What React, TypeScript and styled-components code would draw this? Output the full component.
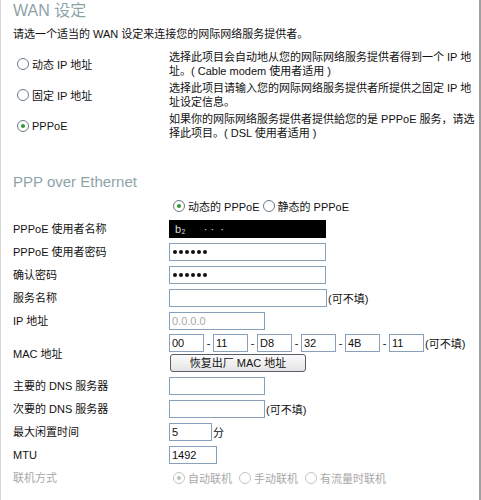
import React from "react";
import styled, { createGlobalStyle } from "styled-components";

const Global = createGlobalStyle`
  html, body { margin: 0; padding: 0; background: #fff; }
  body { font-family: "Liberation Sans", "Noto Sans CJK SC", sans-serif; font-size: 11px; color: #111; }
  * { box-sizing: border-box; }
`;

const Frame = styled.div`
  width: 481px;
  height: 500px;
  border-left: 1px solid #d6d6d6;
  border-right: 2px solid #a0a0a0;
  padding: 1px 0 0 12px;
  overflow: hidden;
`;

const Title = styled.h1<{ $size: number }>`
  margin: 0;
  font-size: ${(p) => p.$size}px;
  font-weight: normal;
  color: #8ea3a8;
  line-height: 20px;
`;

const Intro = styled.p`
  margin: 6px 0 0;
  line-height: 14px;
`;

const ChoiceList = styled.div`
  margin-top: 9px;
  display: flex;
  flex-direction: column;
  gap: 3px;
`;

const ChoiceRow = styled.div`
  display: grid;
  grid-template-columns: 156px 1fr;
  align-items: center;
`;

const Desc = styled.div`
  line-height: 14px;
  white-space: nowrap;
`;

const RadioLabel = styled.label<{ $disabled?: boolean; $indent?: number }>`
  display: inline-flex;
  align-items: center;
  gap: 3px;
  margin-left: ${(p) => p.$indent ?? 4}px;
  color: ${(p) => (p.$disabled ? "#a8a8a8" : "inherit")};
  white-space: nowrap;
`;

const Dot = styled.span<{ $on?: boolean; $disabled?: boolean }>`
  width: 12px;
  height: 12px;
  border-radius: 50%;
  border: 1px solid ${(p) => (p.$disabled ? "#c4c4c4" : "#6a7a86")};
  background: #fff;
  display: inline-flex;
  align-items: center;
  justify-content: center;
  &::after {
    content: "";
    width: 4px;
    height: 4px;
    border-radius: 50%;
    background: ${(p) => (p.$on ? (p.$disabled ? "#b5c7b5" : "#2f9a2f") : "transparent")};
  }
`;

const Section2 = styled.div`
  margin-top: 32px;
`;

const Form = styled.div`
  margin-top: 5px;
  display: grid;
  grid-template-columns: 156px 1fr;
  row-gap: 5px;
  align-items: center;
`;

const Label = styled.div<{ $disabled?: boolean }>`
  color: ${(p) => (p.$disabled ? "#a8a8a8" : "inherit")};
  line-height: 18px;
`;

const Field = styled.div`
  display: flex;
  align-items: center;
  gap: 1px;
  height: 18px;
`;

const Box = styled.input<{ $w: number; $dark?: boolean }>`
  width: ${(p) => p.$w}px;
  height: 18px;
  margin: 0;
  padding: 0 2px;
  border: 1px solid ${(p) => (p.$dark ? "#000" : "#8aa0b8")};
  background: ${(p) => (p.$dark ? "#000" : "#fff")};
  color: ${(p) => (p.$dark ? "#ddd" : "#111")};
  font-family: "Liberation Sans", sans-serif;
  font-size: 11px;
  outline: none;
  &:disabled { color: #aaa; background: #fff; }
`;

const Secret = styled.div`
  width: 157px;
  height: 18px;
  border: 1px solid #8aa0b8;
  display: flex;
  align-items: center;
  padding-left: 3px;
  gap: 2px;
`;

const Bullet = styled.span`
  width: 4px;
  height: 4px;
  border-radius: 50%;
  background: #111;
`;

const MacStack = styled.div`
  display: flex;
  flex-direction: column;
  gap: 2px;
  margin-top: -1px;
`;

const MacLine = styled.div`
  display: flex;
  align-items: center;
  height: 18px;
`;

const Dash = styled.span`
  width: 9px;
  text-align: center;
`;

const Btn = styled.button`
  width: 136px;
  height: 18px;
  margin-left: 1px;
  padding: 0;
  border: 1px solid #555d66;
  border-radius: 3px;
  background: linear-gradient(#fbfbfb, #e4e4e4);
  font-family: "Liberation Sans", "Noto Sans CJK SC", sans-serif;
  font-size: 11px;
  line-height: 16px;
  color: #111;
`;

const RadioGroup = styled.div`
  display: flex;
  align-items: center;
  gap: 1px;
  height: 18px;
`;

const Unit = styled.span`
  margin-left: 1px;
`;

function Radio({ on, disabled, children, indent }: { on?: boolean; disabled?: boolean; children: React.ReactNode; indent?: number }) {
  return (
    <RadioLabel $disabled={disabled} $indent={indent}>
      <Dot $on={on} $disabled={disabled} />
      {children}
    </RadioLabel>
  );
}

function Dots() {
  return (
    <Secret>
      {Array.from({ length: 6 }).map((_, i) => (
        <Bullet key={i} />
      ))}
    </Secret>
  );
}

const mac = ["00", "11", "D8", "32", "4B", "11"];

export default function App() {
  return (
    <>
      <Global />
      <Frame>
        <Title $size={16}>WAN 设定</Title>
        <Intro>请选一个适当的 WAN 设定来连接您的网际网络服务提供者。</Intro>
        <ChoiceList>
          <ChoiceRow>
            <Radio>动态 IP 地址</Radio>
            <Desc>
              选择此项目会自动地从您的网际网络服务提供者得到一个 IP 地<br />
              址。( Cable modem 使用者适用 )
            </Desc>
          </ChoiceRow>
          <ChoiceRow>
            <Radio>固定 IP 地址</Radio>
            <Desc>
              选择此项目请输入您的网际网络服务提供者所提供之固定 IP 地<br />
              址设定信息。
            </Desc>
          </ChoiceRow>
          <ChoiceRow>
            <Radio on>PPPoE</Radio>
            <Desc>
              如果你的网际网络服务提供者提供給您的是 PPPoE 服务，请选<br />
              择此项目。( DSL 使用者适用 )
            </Desc>
          </ChoiceRow>
        </ChoiceList>

        <Section2>
          <Title $size={15}>PPP over Ethernet</Title>
          <Form>
            <div />
            <RadioGroup>
              <Radio on>动态的 PPPoE</Radio>
              <Radio indent={2}>静态的 PPPoE</Radio>
            </RadioGroup>

            <Label>PPPoE 使用者名称</Label>
            <Field>
              <Box $w={157} $dark readOnly value=" b₂      · ·  ·" />
            </Field>

            <Label>PPPoE 使用者密码</Label>
            <Field>
              <Dots />
            </Field>

            <Label>确认密码</Label>
            <Field>
              <Dots />
            </Field>

            <Label>服务名称</Label>
            <Field>
              <Box $w={158} readOnly value="" />
              <span>(可不填)</span>
            </Field>

            <Label>IP 地址</Label>
            <Field>
              <Box $w={96} disabled value="0.0.0.0" />
            </Field>

            <Label>MAC 地址</Label>
            <MacStack>
              <MacLine>
                {mac.map((m, i) => (
                  <React.Fragment key={i}>
                    {i > 0 && <Dash>-</Dash>}
                    <Box $w={35} readOnly value={m} />
                  </React.Fragment>
                ))}
                <Unit>(可不填)</Unit>
              </MacLine>
              <Btn>恢复出厂 MAC 地址</Btn>
            </MacStack>

            <Label>主要的 DNS 服务器</Label>
            <Field>
              <Box $w={96} readOnly value="" />
            </Field>

            <Label>次要的 DNS 服务器</Label>
            <Field>
              <Box $w={96} readOnly value="" />
              <span>(可不填)</span>
            </Field>

            <Label>最大闲置时间</Label>
            <Field>
              <Box $w={43} readOnly value="5" />
              <span>分</span>
            </Field>

            <Label>MTU</Label>
            <Field>
              <Box $w={48} readOnly value="1492" />
            </Field>

            <Label $disabled>联机方式</Label>
            <RadioGroup>
              <Radio on disabled>自动联机</Radio>
              <Radio disabled indent={6}>手动联机</Radio>
              <Radio disabled indent={6}>有流量时联机</Radio>
            </RadioGroup>
          </Form>
        </Section2>
      </Frame>
    </>
  );
}
